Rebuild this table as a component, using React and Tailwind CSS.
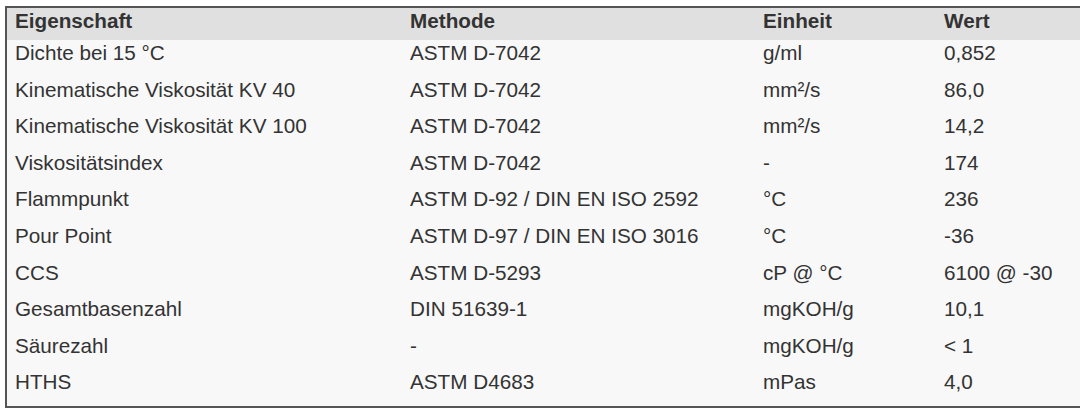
import React from "react";

const rows = [
  ["Dichte bei 15 °C", "ASTM D-7042", "g/ml", "0,852"],
  ["Kinematische Viskosität KV 40", "ASTM D-7042", "mm²/s", "86,0"],
  ["Kinematische Viskosität KV 100", "ASTM D-7042", "mm²/s", "14,2"],
  ["Viskositätsindex", "ASTM D-7042", "-", "174"],
  ["Flammpunkt", "ASTM D-92 / DIN EN ISO 2592", "°C", "236"],
  ["Pour Point", "ASTM D-97 / DIN EN ISO 3016", "°C", "-36"],
  ["CCS", "ASTM D-5293", "cP @ °C", "6100 @ -30"],
  ["Gesamtbasenzahl", "DIN 51639-1", "mgKOH/g", "10,1"],
  ["Säurezahl", "-", "mgKOH/g", "< 1"],
  ["HTHS", "ASTM D4683", "mPas", "4,0"],
];

const cols = "grid grid-cols-[395px_353px_181px_1fr]";

export default function App() {
  return (
    <div className="w-[1080px] h-[412px] bg-white overflow-hidden pt-[6px] pl-[5px] font-['Liberation_Sans',Arial,sans-serif] text-[20.7px] text-[#333]">
      <div className="w-[1100px] border-t-2 border-l-2 border-b-2 border-[#555] bg-[#f8f8f8]">
        <div className={`${cols} h-[32px] bg-[#e0e0e0] font-bold leading-[21px] pt-[1.5px]`}>
          <div className="pl-[8px]">Eigenschaft</div>
          <div className="pl-[8px]">Methode</div>
          <div className="pl-[8px]">Einheit</div>
          <div className="pl-[8px]">Wert</div>
        </div>
        {rows.map((r, i) => (
          <div key={i} className={`${cols} h-[36.6px] leading-[21px] pt-[2px]`}>
            {r.map((c, j) => (
              <div key={j} className="pl-[8px] whitespace-nowrap">{c}</div>
            ))}
          </div>
        ))}
      </div>
    </div>
  );
}
